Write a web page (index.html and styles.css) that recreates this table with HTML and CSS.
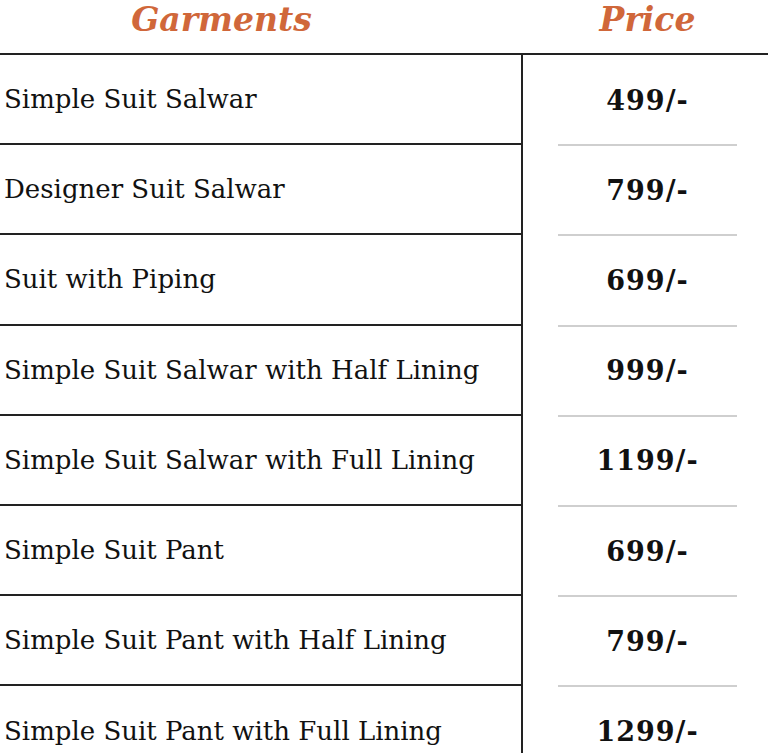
FILE: index.html
```html
<!DOCTYPE html>
<html>
<head>
<meta charset="utf-8">
<link rel="stylesheet" href="styles.css">
</head>
<body>
<div class="table">
  <div class="head head-name">Garments</div>
  <div class="head head-price">Price</div>

  <div class="name">Simple Suit Salwar</div>
  <div class="price">499/-</div>

  <div class="name">Designer Suit Salwar</div>
  <div class="price sep">799/-</div>

  <div class="name">Suit with Piping</div>
  <div class="price sep">699/-</div>

  <div class="name">Simple Suit Salwar with Half Lining</div>
  <div class="price sep">999/-</div>

  <div class="name">Simple Suit Salwar with Full Lining</div>
  <div class="price sep">1199/-</div>

  <div class="name">Simple Suit Pant</div>
  <div class="price sep">699/-</div>

  <div class="name">Simple Suit Pant with Half Lining</div>
  <div class="price sep">799/-</div>

  <div class="name last">Simple Suit Pant with Full Lining</div>
  <div class="price sep">1299/-</div>
</div>
</body>
</html>
```

FILE: styles.css
```css
html, body {
  margin: 0;
  padding: 0;
  background: #ffffff;
  overflow: hidden;
}

.table {
  display: grid;
  grid-template-columns: 523px 245px;
  grid-template-rows: 55px;
  grid-auto-rows: 90.2px;
  font-family: "DejaVu Serif", "Liberation Serif", serif;
  color: #111;
}

.head {
  font-weight: bold;
  font-style: italic;
  font-size: 33px;
  line-height: normal;
  color: #d0673a;
  border-bottom: 2px solid #222;
  display: flex;
  align-items: flex-start;
  justify-content: center;
}

.head-name {
  padding-right: 80px;
}

.head-price {
  padding-left: 4px;
}

.name {
  font-size: 26px;
  border-right: 2px solid #222;
  border-bottom: 2px solid #222;
  display: flex;
  align-items: center;
  padding-left: 4px;
  box-sizing: border-box;
}

.name.last {
  border-bottom: none;
}

.price {
  font-size: 27px;
  font-weight: bold;
  letter-spacing: 1px;
  display: flex;
  align-items: center;
  justify-content: center;
  position: relative;
  padding-left: 4px;
}

.price.sep::before {
  content: "";
  position: absolute;
  top: -1px;
  left: 35px;
  width: 179px;
  height: 2px;
  background: #cfcfcf;
}
```
